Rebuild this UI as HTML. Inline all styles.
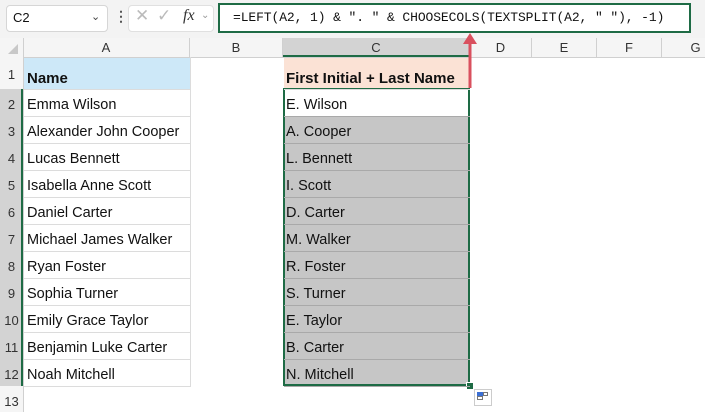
<!DOCTYPE html><html><head><style>
body{margin:0;width:705px;height:412px;background:#fff;font-family:"Liberation Sans",Arial,sans-serif;position:relative;overflow:hidden}
.a{position:absolute}
.t{font-size:14.5px;color:#111;white-space:nowrap}
</style></head><body>
<div class="a" style="left:0;top:0;width:705px;height:38px;background:#f3f3f3"></div>
<div class="a" style="left:6px;top:5px;width:100px;height:25px;background:#fff;border:1px solid #d6d6d6;border-radius:4px"></div>
<div class="a t" style="left:13px;top:10px;font-size:13px">C2</div>
<div class="a" style="left:91px;top:10px;font-size:11px;color:#444">&#8964;</div>
<div class="a" style="left:114px;top:8px;font-size:14px;color:#555;font-weight:bold">&#8942;</div>
<div class="a" style="left:128px;top:5px;width:84px;height:25px;background:#fff;border:1px solid #e0e0e0;border-radius:4px"></div>
<div class="a" style="left:135px;top:6px;font-size:17px;color:#bbb">&#10005;</div>
<div class="a" style="left:157px;top:6px;font-size:17px;color:#bbb">&#10003;</div>
<div class="a" style="left:183px;top:7px;font-size:16px;color:#333;font-style:italic;font-family:'Liberation Serif',serif">fx</div>
<div class="a" style="left:201px;top:10px;font-size:10px;color:#999">&#8964;</div>
<div class="a" style="left:218px;top:3px;width:469px;height:26px;background:#fff;border:2px solid #1e6b45"></div>
<div class="a t" style="left:233px;top:10px;font-family:'Liberation Mono',monospace;font-size:13px;letter-spacing:-0.1px">=LEFT(A2, 1) &amp; ". " &amp; CHOOSECOLS(TEXTSPLIT(A2, " "), -1)</div>
<div class="a" style="left:0;top:38px;width:705px;height:19px;background:#f5f5f5;border-bottom:1px solid #d0d0d0"></div>
<div class="a" style="left:0;top:38px;width:23px;height:374px;background:#f5f5f5;border-right:1px solid #d0d0d0"></div>
<div class="a" style="left:283px;top:38px;width:187px;height:19px;background:#d3d3d3;border-bottom:2px solid #1e6b45;box-sizing:border-box"></div>
<div class="a" style="left:0;top:89px;width:23px;height:297px;background:#d3d3d3;border-right:2px solid #1e6b45;box-sizing:border-box"></div>
<div class="a" style="left:8px;top:44px;width:0;height:0;border-left:10px solid transparent;border-bottom:10px solid #c8c8c8"></div>
<div id="cols"></div>
<div class="a" style="left:24px;top:58px;width:166px;height:31px;background:#cde8f8"></div>
<div class="a" style="left:284px;top:58px;width:186px;height:31px;background:#fbe2d5"></div>
<div class="a" style="left:284px;top:116px;width:186px;height:270px;background:#c6c6c6"></div>
<div class="a" style="left:283px;top:88px;width:187px;height:298px;border:2px solid #1e6b45;box-sizing:border-box"></div>
<div class="a" style="left:466px;top:382px;width:6px;height:6px;background:#1e6b45;border:1px solid #fff"></div>
<div class="a" style="left:474px;top:389px;width:16px;height:15px;border:1px solid #ccc;background:#fff"><div class="a" style="left:2px;top:2px;width:6px;height:4px;background:#3b6fd4"></div><div class="a" style="left:8px;top:2px;width:5px;height:4px;border:1px solid #777;box-sizing:border-box"></div><div class="a" style="left:2px;top:6px;width:6px;height:4px;border:1px solid #777;box-sizing:border-box"></div></div>
<svg class="a" style="left:460px;top:30px" width="20" height="58"><line x1="10" y1="8" x2="10" y2="58" stroke="#d9505e" stroke-width="3"/><polygon points="3,14 10,3 17,14" fill="#d9505e"/></svg>
<script>
var cols=[["A",23,190],["B",190,283],["C",283,470],["D",470,532],["E",532,597],["F",597,662],["G",662,730]],h="";
cols.forEach(function(c){h+='<div class="a" style="left:'+c[1]+'px;top:38px;width:'+(c[2]-c[1])+'px;height:19px;border-right:1px solid #d0d0d0;box-sizing:border-box;text-align:center;font-size:13px;line-height:19px;color:#333">'+c[0]+'</div>';});
var tops=[57,89];for(var i=2;i<=12;i++)tops.push(89+27*(i-1));
var A=["Name","Emma Wilson","Alexander John Cooper","Lucas Bennett","Isabella Anne Scott","Daniel Carter","Michael James Walker","Ryan Foster","Sophia Turner","Emily Grace Taylor","Benjamin Luke Carter","Noah Mitchell"];
var C=["First Initial + Last Name","E. Wilson","A. Cooper","L. Bennett","I. Scott","D. Carter","M. Walker","R. Foster","S. Turner","E. Taylor","B. Carter","N. Mitchell"];
var g="";
for(var r=0;r<13;r++){var y=tops[r],hh=tops[r+1]?tops[r+1]-y:27;
g+='<div class="a" style="left:0;top:'+y+'px;width:23px;height:'+hh+'px;text-align:center;line-height:'+(hh+4)+'px;font-size:13px;color:#333">'+(r+1)+'</div>';
if(r<12){
g+='<div class="a" style="left:24px;top:'+(y+hh)+'px;width:166px;height:1px;background:#dcdcdc"></div>';
g+='<div class="a" style="left:284px;top:'+(y+hh)+'px;width:186px;height:1px;background:'+(r>0?'#a9a9a9':'#dcdcdc')+'"></div>';
var b=r==0?'font-weight:bold;font-size:15px;':'';
g+='<div class="a t" style="left:27px;top:'+(y+hh-19)+'px;'+b+'">'+A[r]+'</div>';
g+='<div class="a t" style="left:286px;top:'+(y+hh-19)+'px;'+b+'">'+C[r]+'</div>';}}
g+='<div class="a" style="left:190px;top:57px;width:1px;height:330px;background:#dcdcdc"></div>';
document.getElementById("cols").outerHTML=h;
document.body.insertAdjacentHTML("beforeend",g);
</script>
</body></html>
